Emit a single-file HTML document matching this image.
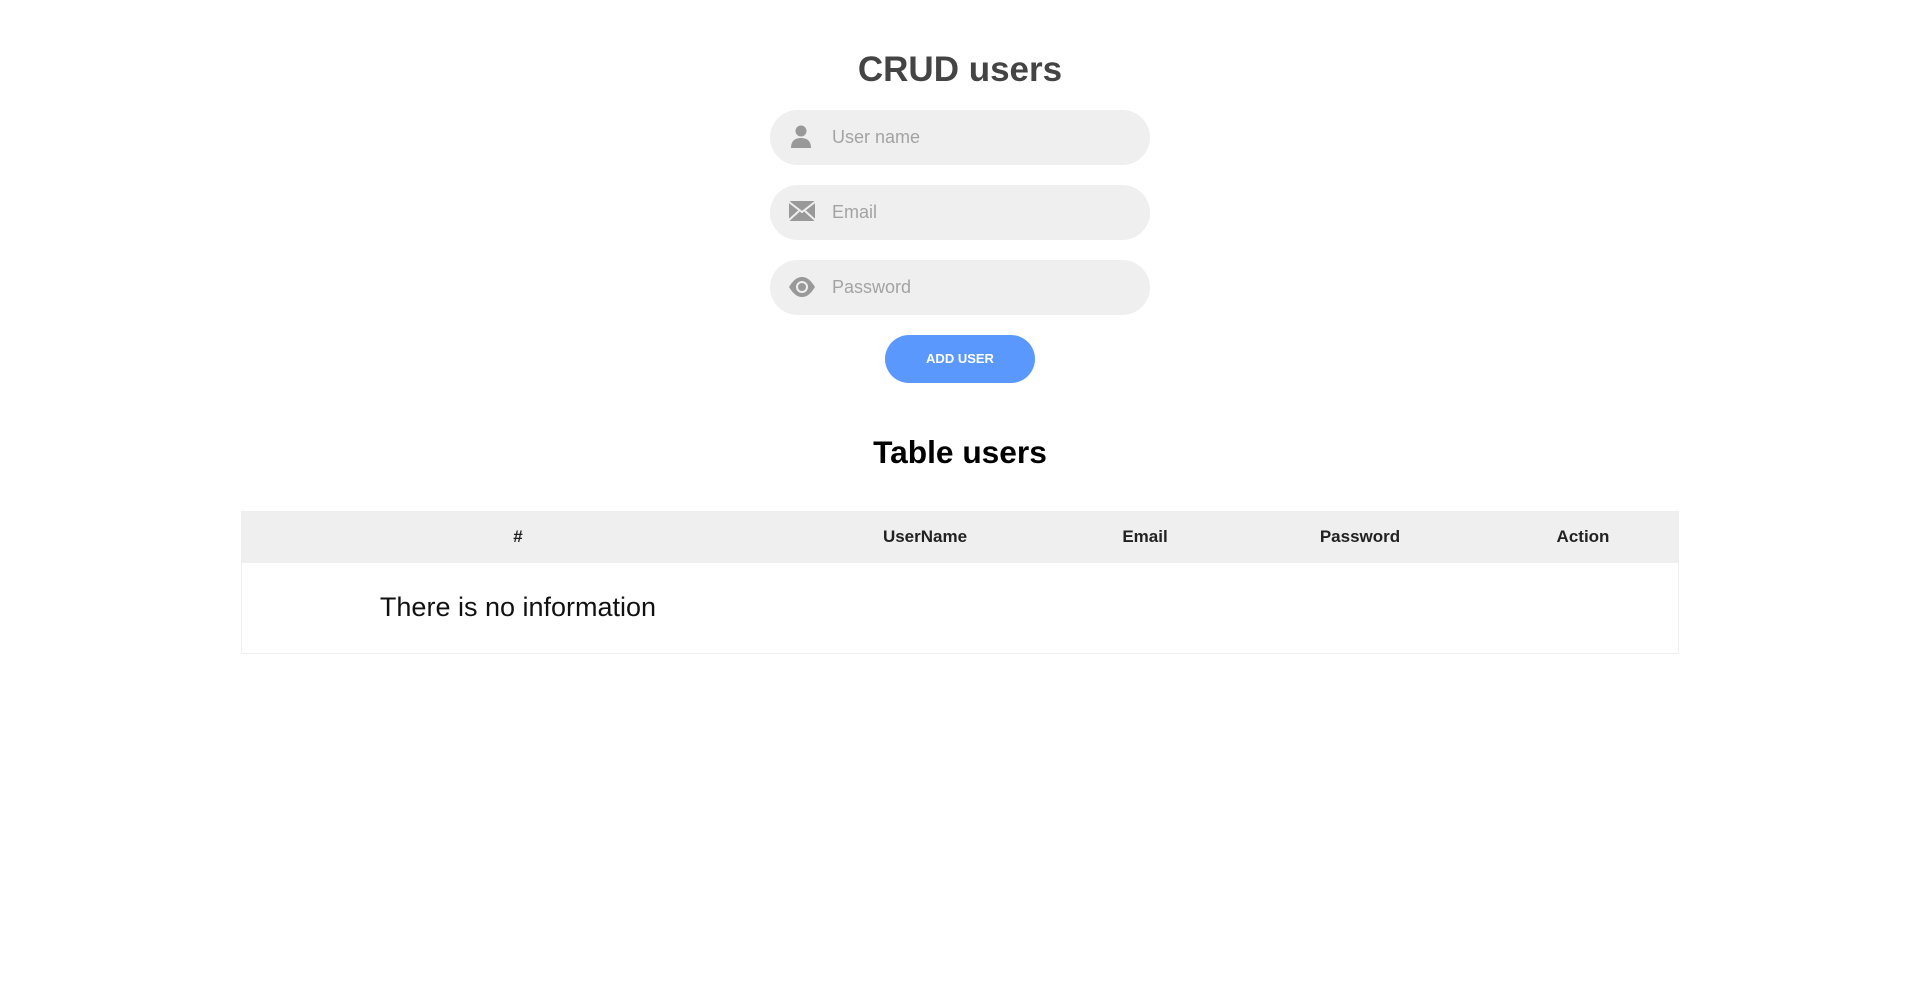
<!DOCTYPE html>
<html><head><meta charset="utf-8"><style>
*{box-sizing:border-box;margin:0;padding:0}
body{width:1920px;height:987px;background:#fff;font-family:"Liberation Sans",Arial,sans-serif;position:relative;overflow:hidden}
h1{position:absolute;top:48px;left:0;width:1920px;text-align:center;font-size:35px;font-weight:bold;color:#444;line-height:44px}
.inp{position:absolute;left:770px;width:380px;height:55px;border-radius:28px;background:#efefef}
.inp span{position:absolute;left:62px;top:0;line-height:55px;font-size:18px;color:#a3a3a3}
.inp svg{position:absolute;left:18px}
.btn{position:absolute;left:885px;top:335px;width:150px;height:48px;border-radius:24px;background:#5b98fd;color:#fff;font-weight:bold;font-size:13px;text-align:center;line-height:48px}
h2{position:absolute;top:432px;left:0;width:1920px;text-align:center;font-size:31.7px;font-weight:bold;color:#000;line-height:40px}
.tbl{position:absolute;left:241px;top:511px;width:1438px;height:143px;border:1px solid #eee}
.hd{position:absolute;left:0;top:0;width:100%;height:51px;background:#efefef}
.hd div{position:absolute;top:-1px;line-height:51px;font-weight:bold;font-size:17px;color:#222;text-align:center}
.no{position:absolute;left:0;width:552px;top:50px;line-height:91px;text-align:center;font-size:27px;color:#111}
</style></head><body>
<h1>CRUD users</h1>
<div class="inp" style="top:110px"><svg style="top:15px" width="26" height="24" viewBox="0 0 26 24"><circle cx="13" cy="6" r="5.5" fill="#999"/><path d="M3 23 C3 15 8 13 13 13 C18 13 23 15 23 23 Z" fill="#999"/></svg><span>User name</span></div>
<div class="inp" style="top:185px"><svg style="top:15px" width="28" height="22" viewBox="0 0 28 22"><rect x="1" y="1" width="26" height="20" rx="2" fill="#999"/><path d="M1 2 L14 12 L27 2 M1 20 L11 11 M27 20 L17 11" stroke="#efefef" stroke-width="2" fill="none"/></svg><span>Email</span></div>
<div class="inp" style="top:260px"><svg style="top:16px" width="28" height="22" viewBox="0 0 28 22"><path d="M1 11 C6 3 10 1 14 1 C18 1 22 3 27 11 C22 19 18 21 14 21 C10 21 6 19 1 11 Z" fill="#999"/><circle cx="14" cy="11" r="6" fill="#efefef"/><circle cx="14" cy="11" r="4" fill="#999"/></svg><span>Password</span></div>
<div class="btn">ADD USER</div>
<h2>Table users</h2>
<div class="tbl">
<div class="hd">
<div style="left:0;width:552px">#</div>
<div style="left:556px;width:254px">UserName</div>
<div style="left:810px;width:186px">Email</div>
<div style="left:996px;width:244px">Password</div>
<div style="left:1240px;width:202px">Action</div>
</div>
<div class="no">There is no information</div>
</div>
</body></html>
